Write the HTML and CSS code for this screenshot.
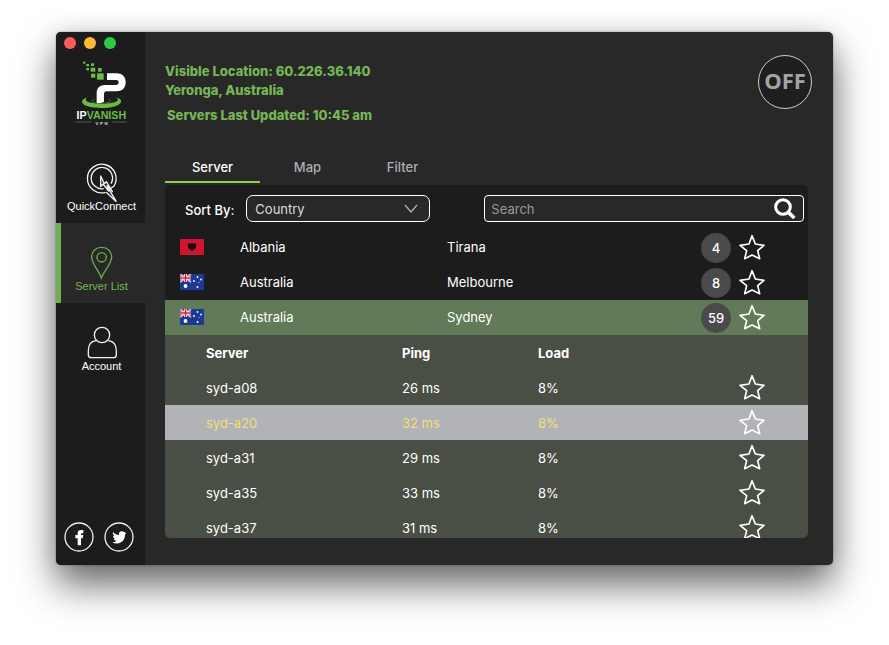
FILE: index.html
```html
<!DOCTYPE html>
<html lang="en">
<head>
    <meta charset="UTF-8">
    <meta name="viewport" content="width=device-width, initial-scale=1.0">
    <title>IPVanish VPN - Server List</title>
    <link rel="stylesheet" href="styles.css">
</head>
<body>
    <!-- Shared icons -->
    <svg class="sprite" aria-hidden="true">
        <symbol id="star" viewBox="805 148 78 78">
            <path d="M844 153L854 178L880 182L861 198L867 222L844 211L822 222L828 198L808 182L835 178Z" fill="none" stroke="#fff" stroke-width="5" stroke-linejoin="round"/>
        </symbol>
        <symbol id="flag-al" viewBox="0 0 24 16">
            <rect width="24" height="16" fill="#d0142f"/>
            <path d="M8 4l2 1 1-1 1 1 1-1 1 1 2-1v4l-1 2-2 1-1 2-1-2-2-1-1-2z" fill="#1c0b0d"/>
        </symbol>
        <symbol id="flag-au" viewBox="0 0 24 16">
            <rect width="24" height="16" fill="#1a3a93"/>
            <path d="M0 0l11 8M11 0L0 8" stroke="#fff" stroke-width="1.6"/>
            <path d="M0 0l11 8M11 0L0 8" stroke="#d8213b" stroke-width=".6"/>
            <path d="M5.500 0v8M0 4h11" stroke="#fff" stroke-width="3"/>
            <path d="M5.500 0v8M0 4h11" stroke="#d8213b" stroke-width="1.500"/>
            <g fill="#fff">
                <circle cx="5.500" cy="12" r="1.900"/>
                <circle cx="17.500" cy="3" r=".9"/>
                <circle cx="14" cy="7" r=".9"/>
                <circle cx="21" cy="5.500" r=".9"/>
                <circle cx="19" cy="8.500" r=".5"/>
                <circle cx="17.500" cy="13" r="1"/>
            </g>
        </symbol>
    </svg>

    <div class="window">
        <aside class="sidebar">
            <div class="window-controls">
                <button class="control close" aria-label="Close"></button>
                <button class="control minimize" aria-label="Minimize"></button>
                <button class="control zoom" aria-label="Zoom"></button>
            </div>

            <svg class="logo" viewBox="72 105 168 195" role="img" aria-label="IPVanish VPN">
                <g fill="#6cbb45">
                    <rect x="99" y="110" width="7" height="6"/>
                    <rect x="109" y="117" width="8" height="7"/>
                    <rect x="123" y="115" width="9" height="8"/>
                    <rect x="109" y="129" width="8" height="7"/>
                    <rect x="122" y="128" width="14" height="12"/>
                    <rect x="144" y="129" width="11" height="11"/>
                    <rect x="123" y="146" width="13" height="12"/>
                    <rect x="141" y="145" width="20" height="19"/>
                </g>
                <path d="M112 217C82 227 94 249 154 249C214 249 228 226 198 216C214 227 196 236 154 236C114 236 98 228 112 217Z" fill="#6cbb45"/>
                <path d="M132 222C118 230 130 235 152 235C178 235 190 229 176 222" fill="none" stroke="#3f7431" stroke-width="3"/>
                <path d="M171 145H200C218 145 227 157 227 172S218 199 200 199H170C164 199 162 203 162 208V230Q151 236 140 234V205C140 188 150 180 165 180H198C203 180 206 177 206 172S203 165 198 165H171Z" fill="#fff"/>
                <text class="logo-name" x="154" y="281" text-anchor="middle"><tspan fill="#fff">IP</tspan><tspan fill="#6cbb45">VANISH</tspan></text>
                <path d="M77 291h48M186 291h44" stroke="#777" stroke-width="2"/>
                <text class="logo-sub" x="157" y="300" text-anchor="middle" fill="#ddd">VPN</text>
            </svg>

            <nav class="nav">
                <a href="#" class="nav-item">
                    <svg width="32" height="36" viewBox="105 40 96 108" fill="none" stroke="#f2f2f2" stroke-width="4">
                        <path d="M164 128A43 43 0 1 1 189 109L174 119L196 156L166 128"/>
                        <path d="M158 117A32 32 0 1 1 180 102"/>
                        <path d="M149 79L149 111L156 103L173 124L168 108L184 126L166 96L160 102Z" stroke-linejoin="round"/>
                    </svg>
                    <span>QuickConnect</span>
                </a>
                <a href="#" class="nav-item active">
                    <svg width="23" height="33" viewBox="120 290 69 99" fill="none" stroke="#6cab4a" stroke-width="4">
                        <path d="M154 386C148 366 125 344 125 323C125 305 138 294 155 294C172 294 185 305 185 323C185 344 161 366 154 386Z"/>
                        <circle cx="155" cy="324" r="14"/>
                    </svg>
                    <span>Server List</span>
                </a>
                <a href="#" class="nav-item">
                    <svg width="30" height="33" viewBox="110 48 90 99" fill="none" stroke="#f2f2f2" stroke-width="4">
                        <circle cx="155" cy="75" r="23"/>
                        <path d="M137 92C120 94 114 106 114 122V134Q114 143 123 143H189Q198 143 198 134V122C198 106 191 94 174 92"/>
                    </svg>
                    <span>Account</span>
                </a>
            </nav>

            <div class="social">
                <a href="#" aria-label="Facebook">
                    <svg width="30" height="30" viewBox="43 50 90 90">
                        <circle cx="88" cy="95" r="42" fill="none" stroke="#eee" stroke-width="4"/>
                        <path d="M84 120V99H77V89H84V84Q84 74 95 74H101V84H97Q94 84 94 87V89H101L99 99H94V120Z" fill="#fff"/>
                    </svg>
                </a>
                <a href="#" aria-label="Twitter">
                    <svg width="30" height="30" viewBox="163 50 90 90">
                        <circle cx="208" cy="95" r="42" fill="none" stroke="#eee" stroke-width="4"/>
                        <path d="M190 80Q197 89 208 90Q206 80 215 78Q220 77 223 81L229 79L225 84L230 83L226 88Q226 104 214 111Q201 118 188 111Q196 111 200 107Q194 106 192 101H196Q190 98 190 92L194 93Q187 87 190 80Z" fill="#fff"/>
                    </svg>
                </a>
            </div>
        </aside>

        <main class="main">
            <header class="header">
                <div class="location">
                    <p>Visible Location: 60.226.36.140</p>
                    <p>Yeronga, Australia</p>
                    <p class="updated">Servers Last Updated: 10:45 am</p>
                </div>
                <button class="power">OFF</button>
            </header>

            <div class="tabs" role="tablist">
                <button class="tab active" role="tab" aria-selected="true">Server</button>
                <button class="tab" role="tab" aria-selected="false">Map</button>
                <button class="tab" role="tab" aria-selected="false">Filter</button>
            </div>

            <section class="panel">
                <div class="toolbar">
                    <label for="sort">Sort By:</label>
                    <div class="select">
                        <select id="sort">
                            <option>Country</option>
                        </select>
                        <svg class="chevron" width="14" height="9" viewBox="0 0 14 9" fill="none" stroke="#a5a5a5" stroke-width="1.500"><path d="M1 1l6 7 6-7"/></svg>
                    </div>
                    <div class="search">
                        <input type="search" placeholder="Search" aria-label="Search">
                        <button class="search-button" aria-label="Search">
                            <svg width="23" height="23" viewBox="908 36 69 69" fill="none" stroke="#fff">
                                <circle cx="938" cy="66" r="22" stroke-width="9"/>
                                <path d="M955 83l17 16" stroke-width="11"/>
                            </svg>
                        </button>
                    </div>
                </div>

                <table class="countries">
                    <colgroup>
                        <col class="col-flag"><col class="col-country"><col><col class="col-count"><col class="col-star">
                    </colgroup>
                    <tbody>
                        <tr>
                            <td><svg class="flag"><use href="#flag-al"/></svg></td>
                            <td>Albania</td>
                            <td>Tirana</td>
                            <td class="count-cell"><span class="count">4</span></td>
                            <td><button class="star" aria-label="Favorite"><svg><use href="#star"/></svg></button></td>
                        </tr>
                        <tr>
                            <td><svg class="flag"><use href="#flag-au"/></svg></td>
                            <td>Australia</td>
                            <td>Melbourne</td>
                            <td class="count-cell"><span class="count">8</span></td>
                            <td><button class="star" aria-label="Favorite"><svg><use href="#star"/></svg></button></td>
                        </tr>
                        <tr class="expanded">
                            <td><svg class="flag"><use href="#flag-au"/></svg></td>
                            <td>Australia</td>
                            <td>Sydney</td>
                            <td class="count-cell"><span class="count">59</span></td>
                            <td><button class="star" aria-label="Favorite"><svg><use href="#star"/></svg></button></td>
                        </tr>
                    </tbody>
                </table>

                <table class="servers">
                    <colgroup>
                        <col class="col-server"><col class="col-ping"><col><col class="col-star">
                    </colgroup>
                    <thead>
                        <tr>
                            <th>Server</th>
                            <th>Ping</th>
                            <th>Load</th>
                            <th></th>
                        </tr>
                    </thead>
                    <tbody>
                        <tr>
                            <td>syd-a08</td>
                            <td>26 ms</td>
                            <td>8%</td>
                            <td><button class="star" aria-label="Favorite"><svg><use href="#star"/></svg></button></td>
                        </tr>
                        <tr class="selected">
                            <td>syd-a20</td>
                            <td>32 ms</td>
                            <td>8%</td>
                            <td><button class="star" aria-label="Favorite"><svg><use href="#star"/></svg></button></td>
                        </tr>
                        <tr>
                            <td>syd-a31</td>
                            <td>29 ms</td>
                            <td>8%</td>
                            <td><button class="star" aria-label="Favorite"><svg><use href="#star"/></svg></button></td>
                        </tr>
                        <tr>
                            <td>syd-a35</td>
                            <td>33 ms</td>
                            <td>8%</td>
                            <td><button class="star" aria-label="Favorite"><svg><use href="#star"/></svg></button></td>
                        </tr>
                        <tr>
                            <td>syd-a37</td>
                            <td>31 ms</td>
                            <td>8%</td>
                            <td><button class="star" aria-label="Favorite"><svg><use href="#star"/></svg></button></td>
                        </tr>
                    </tbody>
                </table>
            </section>
        </main>
    </div>
</body>
</html>
```
FILE: styles.css
```css
:root {
    --window: #282828;
    --dark: #1c1c1c;
    --green: #76b655;
    --green-bar: #6fb14f;
    --row: 35px;
}

* {
    box-sizing: border-box;
    margin: 0;
    padding: 0;
}

body {
    height: 100vh;
    padding: 32px 56px 80px;
    background: #fff;
    color: #fff;
    font-family: Inter, "Liberation Sans", sans-serif;
    font-size: 13px;
    overflow: hidden;
}

button,
input,
select {
    font: inherit;
    color: inherit;
    background: none;
    border: none;
}

button {
    cursor: pointer;
}

a {
    color: inherit;
    text-decoration: none;
}

svg {
    display: block;
}

.sprite {
    position: absolute;
    width: 0;
    height: 0;
}

.window {
    display: flex;
    height: 100%;
    background: var(--window);
    border-radius: 5px;
    overflow: hidden;
    box-shadow: 0 0 2px rgba(0, 0, 0, 0.4), 0 0 24px rgba(0, 0, 0, 0.1), 0 20px 38px rgba(0, 0, 0, 0.58);
}

/* Sidebar */
.sidebar {
    display: flex;
    flex-direction: column;
    width: 89px;
    padding-top: 5px;
    background: var(--dark);
}

.window-controls {
    display: flex;
    gap: 8px;
    padding-left: 8px;
}

.control {
    width: 12px;
    height: 12px;
    border-radius: 50%;
}

.close {
    background: #fc5b57;
}

.minimize {
    background: #fdb934;
}

.zoom {
    background: #2fc841;
}

.logo {
    width: 56px;
    height: 65px;
    margin: 11px 0 18px 18px;
    overflow: visible;
}

.logo-name,
.logo-sub {
    font-family: "Liberation Sans", Arial, sans-serif;
    font-size: 32px;
    font-weight: 700;
}

.logo-sub {
    font-size: 13px;
    letter-spacing: 5px;
}

.nav-item {
    display: flex;
    flex-direction: column;
    align-items: center;
    justify-content: flex-end;
    height: 80px;
    padding: 0 3px 10px 0;
    border-left: 5px solid transparent;
    font-family: "Liberation Sans", Arial, sans-serif;
    font-size: 11px;
    line-height: 14px;
}

.nav-item svg {
    overflow: visible;
}

.nav-item.active {
    background: var(--window);
    border-left-color: var(--green-bar);
    color: var(--green);
}

.social {
    display: flex;
    gap: 10px;
    margin-top: auto;
    padding: 0 0 13px 8px;
}

/* Main area */
.main {
    display: flex;
    flex: 1;
    flex-direction: column;
    min-width: 0;
    padding: 22px 25px 27px 20px;
}

.header {
    display: flex;
    justify-content: space-between;
    height: 98px;
    margin-right: -4px;
}

.location {
    padding-top: 8px;
    color: var(--green);
    font-weight: 800;
    line-height: 19px;
}

.updated {
    margin-top: 6px;
    padding-left: 2px;
}

.power {
    width: 54px;
    height: 54px;
    margin-top: 1px;
    padding-bottom: 4px;
    border: 1px solid #ccc;
    border-radius: 50%;
    background: #201e1f;
    color: #a3a4a8;
    font-family: "Open Sans", sans-serif;
    font-size: 22px;
    font-weight: 700;
}

.tabs {
    display: flex;
    margin-bottom: 2px;
}

.tab {
    width: 95px;
    height: 31px;
    border-bottom: 2px solid transparent;
    color: #aeaeb2;
    font-weight: 500;
}

.tab.active {
    border-bottom-color: #93cf4f;
    color: #fff;
}

.panel {
    flex: 1;
    min-height: 0;
    background: var(--dark);
    border-radius: 5px;
    overflow: hidden;
}

.toolbar {
    display: flex;
    align-items: center;
    height: 45px;
    padding: 2px 4px 0 20px;
}

.toolbar label {
    margin-right: 12px;
    padding-top: 2px;
    font-weight: 500;
}

.select {
    position: relative;
    width: 184px;
    margin-right: 54px;
}

.select select {
    display: block;
    width: 100%;
    height: 27px;
    padding: 0 8px;
    border: 1px solid #fff;
    border-radius: 7px;
    background: var(--window);
    color: #ddd;
    appearance: none;
}

.chevron {
    position: absolute;
    top: 9px;
    right: 12px;
    pointer-events: none;
}

.search {
    display: flex;
    flex: 1;
    align-items: center;
    height: 27px;
    padding: 0 7px 0 6px;
    border: 1px solid #fff;
    border-radius: 4px;
    background: var(--window);
}

.search input {
    flex: 1;
    min-width: 0;
    outline: none;
    appearance: none;
}

.search input::placeholder {
    color: #9a9a9a;
}

/* Lists */
table {
    width: 100%;
    table-layout: fixed;
    border-collapse: collapse;
}

tr {
    height: var(--row);
}

td,
th {
    text-align: left;
    vertical-align: middle;
}

th {
    font-weight: 700;
}

.countries td:not(.count-cell),
.servers td:last-child {
    padding-bottom: 2px;
}

.col-flag {
    width: 75px;
}

.col-country {
    width: 207px;
}

.col-count {
    width: 38px;
}

.col-star {
    width: 69px;
}

.col-server {
    width: 237px;
}

.col-ping {
    width: 136px;
}

.flag {
    width: 24px;
    height: 16px;
    margin-left: 15px;
}

.count {
    display: block;
    width: 30px;
    height: 30px;
    border-radius: 50%;
    background: #4a4a4a;
    font-weight: 500;
    line-height: 30px;
    text-align: center;
}

.star,
.star svg {
    display: block;
    width: 26px;
    height: 26px;
}

.expanded {
    background: #637a58;
}

.servers {
    background: #4a4f45;
}

.servers td:first-child,
.servers th:first-child {
    padding-left: 41px;
}

.servers .selected {
    background: #b1b3b6;
    color: #f2df7b;
}
```
